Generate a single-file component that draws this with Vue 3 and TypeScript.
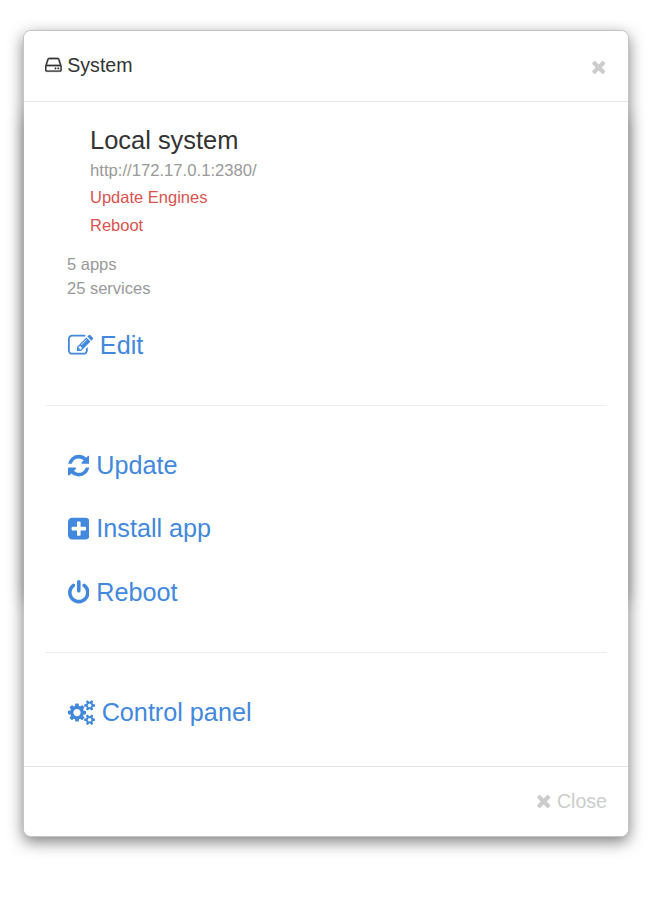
<script setup lang="ts">
interface Icon {
  box: string
  width: number
  d: string
}

interface Action {
  icon: string
  label: string
}

const icons: Record<string, Icon> = {
  drive: {
    box: '128 0 1536 1792',
    width: 0.857,
    d: 'M1168 1216q0 33-23.5 56.5t-56.5 23.5-56.5-23.5-23.5-56.5 23.5-56.5 56.5-23.5 56.5 23.5 23.5 56.5zm256 0q0 33-23.5 56.5t-56.5 23.5-56.5-23.5-23.5-56.5 23.5-56.5 56.5-23.5 56.5 23.5 23.5 56.5zm112 160v-320q0-13-9.5-22.5t-22.5-9.5h-1216q-13 0-22.5 9.5t-9.5 22.5v320q0 13 9.5 22.5t22.5 9.5h1216q13 0 22.5-9.5t9.5-22.5zm-1230-480h1180l-157-482q-4-13-16-21.5t-26-8.5h-782q-14 0-26 8.5t-16 21.5zm1358 160v320q0 66-47 113t-113 47h-1216q-66 0-113-47t-47-113v-320q0-25 16-75l197-606q17-53 63-86t101-33h782q55 0 101 33t63 86l197 606q16 50 16 75z',
  },
  times: {
    box: '192 0 1408 1792',
    width: 0.786,
    d: 'M1490 1322q0 40-28 68l-136 136q-28 28-68 28t-68-28l-294-294-294 294q-28 28-68 28t-68-28l-136-136q-28-28-28-68t28-68l294-294-294-294q-28-28-28-68t28-68l136-136q28-28 68-28t68 28l294 294 294-294q28-28 68-28t68 28l136 136q28 28 28 68t-28 68l-294 294 294 294q28 28 28 68z',
  },
  edit: {
    box: '0 0 1792 1792',
    width: 1,
    d: 'M888 1184l116-116-152-152-116 116v56h96v96h56zm440-720q-16-16-33 1l-350 350q-17 17-1 33t33-1l350-350q17-17 1-33zm80 594v190q0 119-84.5 203.5t-203.5 84.5h-832q-119 0-203.5-84.5t-84.5-203.5v-832q0-119 84.5-203.5t203.5-84.5h832q63 0 117 25 15 7 18 23 3 17-9 29l-49 49q-14 14-32 8-23-6-45-6h-832q-66 0-113 47t-47 113v832q0 66 47 113t113 47h832q66 0 113-47t47-113v-126q0-13 9-22l64-64q15-15 35-7t20 29zm-96-738l288 288-672 672h-288v-288zm444 132l-92 92-288-288 92-92q28-28 68-28t68 28l152 152q28 28 28 68t-28 68z',
  },
  refresh: {
    box: '128 0 1536 1792',
    width: 0.857,
    d: 'M1639 1056q0 5-1 7-64 268-268 434.5t-478 166.5q-146 0-282.5-55t-243.5-157l-129 129q-19 19-45 19t-45-19-19-45v-448q0-26 19-45t45-19h448q26 0 45 19t19 45-19 45l-137 137q71 66 161 102t187 36q134 0 250-65t186-179q11-17 53-117 8-23 30-23h192q13 0 22.5 9.5t9.5 22.5zm25-800v448q0 26-19 45t-45 19h-448q-26 0-45-19t-19-45 19-45l138-138q-148-137-349-137-134 0-250 65t-186 179q-11 17-53 117-8 23-30 23h-199q-13 0-22.5-9.5t-9.5-22.5v-7q65-268 270-434.5t480-166.5q146 0 284 55.5t245 156.5l130-129q19-19 45-19t45 19 19 45z',
  },
  plus: {
    box: '128 0 1536 1792',
    width: 0.857,
    d: 'M1408 960v-128q0-26-19-45t-45-19h-320v-320q0-26-19-45t-45-19h-128q-26 0-45 19t-19 45v320h-320q-26 0-45 19t-19 45v128q0 26 19 45t45 19h320v320q0 26 19 45t45 19h128q26 0 45-19t19-45v-320h320q26 0 45-19t19-45zm256-544v960q0 119-84.5 203.5t-203.5 84.5h-960q-119 0-203.5-84.5t-84.5-203.5v-960q0-119 84.5-203.5t203.5-84.5h960q119 0 203.5 84.5t84.5 203.5z',
  },
  power: {
    box: '128 0 1536 1792',
    width: 0.857,
    d: 'M1664 896q0 156-61 298t-164 245-245 164-298 61-298-61-245-164-164-245-61-298q0-182 80.5-343t226.5-270q43-32 95.5-25t83.5 50q32 42 24.5 94.5t-49.5 84.5q-98 74-151.5 181t-53.5 228q0 104 40.5 198.5t109.5 163.5 163.5 109.5 198.5 40.5 198.5-40.5 163.5-109.5 109.5-163.5 40.5-198.5q0-121-53.5-228t-151.5-181q-42-32-49.5-84.5t24.5-94.5q31-43 84-50t95 25q146 109 226.5 270t80.5 343zm-640-768v640q0 52-38 90t-90 38-90-38-38-90v-640q0-52 38-90t90-38 90 38 38 90z',
  },
  cogs: {
    box: '0 0 1920 1792',
    width: 1.0714,
    d: 'M896 896q0-106-75-181t-181-75-181 75-75 181 75 181 181 75 181-75 75-181zm768 512q0-52-38-90t-90-38-90 38-38 90q0 53 37.5 90.5t90.5 37.5 90.5-37.5 37.5-90.5zm0-1024q0-52-38-90t-90-38-90 38-38 90q0 53 37.5 90.5t90.5 37.5 90.5-37.5 37.5-90.5zm-384 421v185q0 10-7 19.5t-16 10.5l-155 24q-11 35-32 76 34 48 90 115 7 11 7 20 0 12-7 19-23 30-82.5 89.5t-78.5 59.5q-11 0-21-7l-115-90q-37 19-77 31-11 108-23 155-7 24-30 24h-186q-11 0-20-7.5t-10-17.5l-23-153q-34-10-75-31l-118 89q-7 7-20 7-11 0-21-8-144-133-144-160 0-9 7-19 10-14 41-53t47-61q-23-44-35-82l-152-24q-10-1-17-9.5t-7-19.5v-185q0-10 7-19.5t16-10.5l155-24q11-35 32-76-34-48-90-115-7-11-7-20 0-12 7-20 22-30 82-89t79-59q11 0 21 7l115 90q34-18 77-32 11-108 23-154 7-24 30-24h186q11 0 20 7.5t10 17.5l23 153q34 10 75 31l118-89q8-7 20-7 11 0 21 8 144 133 144 160 0 8-7 19-12 16-42 54t-45 60q23 48 34 82l152 23q10 2 17 10.5t7 19.5zm640 533v140q0 16-149 31-12 27-30 52 51 113 51 138 0 4-4 7-122 71-124 71-8 0-46-47t-52-68q-20 2-30 2t-30-2q-14 21-52 68t-46 47q-2 0-124-71-4-3-4-7 0-25 51-138-18-25-30-52-149-15-149-31v-140q0-16 149-31 13-29 30-52-51-113-51-138 0-4 4-7 4-2 35-20t59-34 30-16q8 0 46 46.5t52 67.5q20-2 30-2t30 2q51-71 92-112l6-2q4 0 124 70 4 3 4 7 0 25-51 138 17 23 30 52 149 15 149 31zm0-1024v140q0 16-149 31-12 27-30 52 51 113 51 138 0 4-4 7-122 71-124 71-8 0-46-47t-52-68q-20 2-30 2t-30-2q-14 21-52 68t-46 47q-2 0-124-71-4-3-4-7 0-25 51-138-18-25-30-52-149-15-149-31v-140q0-16 149-31 13-29 30-52-51-113-51-138 0-4 4-7 4-2 35-20t59-34 30-16q8 0 46 46.5t52 67.5q20-2 30-2t30 2q51-71 92-112l6-2q4 0 124 70 4 3 4 7 0 25-51 138 17 23 30 52 149 15 149 31z',
  },
}

const groups: Action[][] = [
  [{ icon: 'edit', label: 'Edit' }],
  [
    { icon: 'refresh', label: 'Update' },
    { icon: 'plus', label: 'Install app' },
    { icon: 'power', label: 'Reboot' },
  ],
  [{ icon: 'cogs', label: 'Control panel' }],
]
</script>

<template>
  <main class="page">
    <section class="modal">
      <header class="header">
        <h1 class="title">
          <svg class="icon drive" :viewBox="icons.drive.box" :style="{ width: icons.drive.width + 'em' }"><path :d="icons.drive.d" /></svg>
          System
        </h1>
        <button class="dismiss" type="button">
          <svg class="icon" :viewBox="icons.times.box" :style="{ width: icons.times.width + 'em' }"><path :d="icons.times.d" /></svg>
        </button>
      </header>

      <div class="body">
        <div class="summary">
          <h2 class="name">Local system</h2>
          <div class="line muted">http://172.17.0.1:2380/</div>
          <div class="line danger">Update Engines</div>
          <div class="line danger">Reboot</div>
        </div>
        <div class="counts">
          <div>5 apps</div>
          <div>25 services</div>
        </div>
        <template v-for="(group, i) in groups" :key="i">
          <hr v-if="i > 0" class="rule" />
          <ul class="actions">
            <li v-for="action in group" :key="action.label" class="action">
              <svg class="icon" :viewBox="icons[action.icon].box" :style="{ width: icons[action.icon].width + 'em' }"><path :d="icons[action.icon].d" /></svg>
              {{ action.label }}
            </li>
          </ul>
        </template>
      </div>

      <footer class="footer">
        <button class="close" type="button">
          <svg class="icon" :viewBox="icons.times.box" :style="{ width: icons.times.width + 'em' }"><path :d="icons.times.d" /></svg>
          Close
        </button>
      </footer>
    </section>
  </main>
</template>

<style>
body {
  background: #fff;
}
</style>

<style scoped>
.page {
  box-sizing: border-box;
  height: 900px;
  padding: 30px 21px 0 23px;
  overflow: hidden;
  font-family: "Liberation Sans", Arial, sans-serif;
  font-size: 19.6px;
  line-height: 28px;
  color: #333;
}
.modal {
  position: relative;
  z-index: 0;
  box-sizing: border-box;
  height: 807px;
  display: flex;
  flex-direction: column;
  background: #fff;
  border: 1px solid #c4c4c4;
  border-radius: 8px;
  box-shadow: 0 5px 15px rgba(0, 0, 0, 0.5);
}
/* shadow of the shorter dialog stacked underneath */
.modal::before {
  content: "";
  position: absolute;
  z-index: -2;
  top: 80px;
  left: 0;
  right: 0;
  height: 484px;
  box-shadow: 0 5px 15px rgba(0, 0, 0, 0.25);
}
.modal::after {
  content: "";
  position: absolute;
  z-index: -1;
  inset: 0;
  background: #fff;
  border-radius: 7px;
}
.icon {
  display: inline-block;
  height: 1em;
  vertical-align: -0.143em;
  fill: currentColor;
}
.drive {
  stroke: currentColor;
  stroke-width: 22;
}
.header {
  box-sizing: border-box;
  height: 71px;
  padding: 20px 21px;
  display: flex;
  justify-content: space-between;
  border-bottom: 1px solid #e5e5e5;
}
.title {
  margin: 0;
  font-size: 19.6px;
  font-weight: 400;
}
.dismiss,
.close {
  padding: 0;
  border: 0;
  background: none;
  font: inherit;
  color: #ccc;
}
.dismiss {
  height: 32px;
  padding-right: 1px;
}
.body {
  flex: 1;
  padding: 24px 21px 0;
}
.summary {
  padding-left: 45px;
}
.name {
  margin: 0 0 2.5px;
  font-size: 25.45px;
  line-height: 28px;
  font-weight: 400;
}
.line {
  font-size: 16.66px;
  line-height: 27.5px;
}
.muted,
.counts {
  color: #999;
}
.danger {
  font-size: 16.5px;
  color: #d9534f;
}
.counts {
  padding: 13px 22px 13.6px;
  font-size: 16.5px;
  line-height: 24px;
}
.actions {
  margin: 0;
  padding: 0 22.7px;
  list-style: none;
}
.action {
  padding: 17.3px 0 18.2px;
  font-size: 25.2px;
  line-height: 28px;
  color: #4288dd;
}
.action .icon {
  vertical-align: -0.17em;
}
.rule {
  height: 1px;
  margin: 28px 0;
  border: 0;
  background: #eee;
}
.rule:first-of-type {
  margin-bottom: 27.4px;
}
.footer {
  box-sizing: border-box;
  height: 70px;
  padding: 20px 21px;
  display: flex;
  justify-content: flex-end;
  border-top: 1px solid #e5e5e5;
}
.close {
  height: 28px;
}
</style>
